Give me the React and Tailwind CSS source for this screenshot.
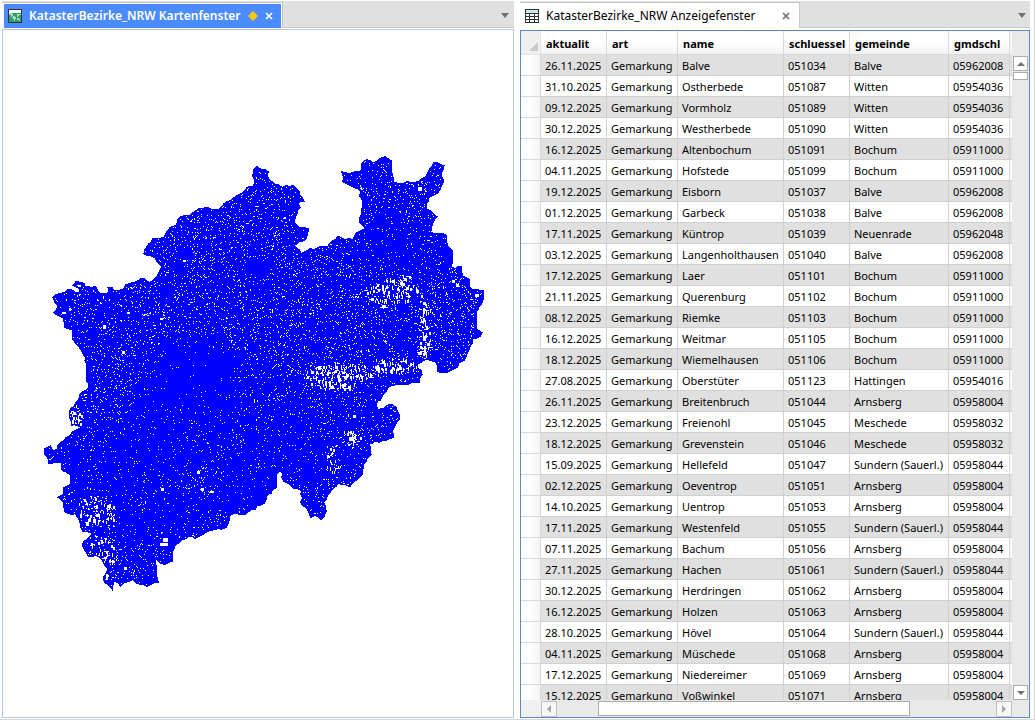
import React from "react";

const rows = [
  ["26.11.2025", "Gemarkung", "Balve", "051034", "Balve", "05962008"],
  ["31.10.2025", "Gemarkung", "Ostherbede", "051087", "Witten", "05954036"],
  ["09.12.2025", "Gemarkung", "Vormholz", "051089", "Witten", "05954036"],
  ["30.12.2025", "Gemarkung", "Westherbede", "051090", "Witten", "05954036"],
  ["16.12.2025", "Gemarkung", "Altenbochum", "051091", "Bochum", "05911000"],
  ["04.11.2025", "Gemarkung", "Hofstede", "051099", "Bochum", "05911000"],
  ["19.12.2025", "Gemarkung", "Eisborn", "051037", "Balve", "05962008"],
  ["01.12.2025", "Gemarkung", "Garbeck", "051038", "Balve", "05962008"],
  ["17.11.2025", "Gemarkung", "Küntrop", "051039", "Neuenrade", "05962048"],
  ["03.12.2025", "Gemarkung", "Langenholthausen", "051040", "Balve", "05962008"],
  ["17.12.2025", "Gemarkung", "Laer", "051101", "Bochum", "05911000"],
  ["21.11.2025", "Gemarkung", "Querenburg", "051102", "Bochum", "05911000"],
  ["08.12.2025", "Gemarkung", "Riemke", "051103", "Bochum", "05911000"],
  ["16.12.2025", "Gemarkung", "Weitmar", "051105", "Bochum", "05911000"],
  ["18.12.2025", "Gemarkung", "Wiemelhausen", "051106", "Bochum", "05911000"],
  ["27.08.2025", "Gemarkung", "Oberstüter", "051123", "Hattingen", "05954016"],
  ["26.11.2025", "Gemarkung", "Breitenbruch", "051044", "Arnsberg", "05958004"],
  ["23.12.2025", "Gemarkung", "Freienohl", "051045", "Meschede", "05958032"],
  ["18.12.2025", "Gemarkung", "Grevenstein", "051046", "Meschede", "05958032"],
  ["15.09.2025", "Gemarkung", "Hellefeld", "051047", "Sundern (Sauerl.)", "05958044"],
  ["02.12.2025", "Gemarkung", "Oeventrop", "051051", "Arnsberg", "05958004"],
  ["14.10.2025", "Gemarkung", "Uentrop", "051053", "Arnsberg", "05958004"],
  ["17.11.2025", "Gemarkung", "Westenfeld", "051055", "Sundern (Sauerl.)", "05958044"],
  ["07.11.2025", "Gemarkung", "Bachum", "051056", "Arnsberg", "05958004"],
  ["27.11.2025", "Gemarkung", "Hachen", "051061", "Sundern (Sauerl.)", "05958044"],
  ["30.12.2025", "Gemarkung", "Herdringen", "051062", "Arnsberg", "05958004"],
  ["16.12.2025", "Gemarkung", "Holzen", "051063", "Arnsberg", "05958004"],
  ["28.10.2025", "Gemarkung", "Hövel", "051064", "Sundern (Sauerl.)", "05958044"],
  ["04.11.2025", "Gemarkung", "Müschede", "051068", "Arnsberg", "05958004"],
  ["17.12.2025", "Gemarkung", "Niedereimer", "051069", "Arnsberg", "05958004"],
  ["15.12.2025", "Gemarkung", "Voßwinkel", "051071", "Arnsberg", "05958004"],
];

const columns = [
  { name: "aktualit", width: "w-[66px]" },
  { name: "art", width: "w-[71px]" },
  { name: "name", width: "w-[106px]" },
  { name: "schluessel", width: "w-[66px]" },
  { name: "gemeinde", width: "w-[99px]" },
  { name: "gmdschl", width: "w-[61px]" },
];

// Outer border of the districts, clockwise from the north-west
const border = [
  [144, 254], [147, 247], [153, 239], [164, 238], [170, 228], [176, 226], [181, 217], [190, 216],
  [199, 209], [218, 210], [227, 202], [237, 196], [247, 188], [253, 187], [255, 181], [253, 176],
  [257, 167], [268, 172], [269, 180], [282, 188], [293, 186], [299, 192], [304, 202], [298, 203],
  [300, 208], [297, 210], [294, 223], [300, 228], [308, 229], [306, 239], [294, 246], [301, 254],
  [310, 249], [328, 247], [338, 237], [353, 240], [357, 233], [366, 228], [360, 222], [362, 210],
  [361, 192], [355, 188], [343, 182], [342, 172], [352, 173], [361, 172], [362, 164], [367, 160],
  [373, 163], [385, 157], [391, 161], [393, 182], [398, 184], [419, 182], [428, 173], [434, 163],
  [444, 166], [441, 174], [444, 182], [438, 193], [428, 198], [426, 209], [437, 217], [433, 223],
  [430, 233], [446, 235], [447, 243], [452, 250], [452, 268], [462, 267], [463, 277], [470, 280],
  [472, 290], [484, 291], [482, 304], [476, 312], [477, 330], [482, 333], [480, 337], [472, 338],
  [473, 343], [466, 358], [455, 369], [447, 373], [438, 372], [437, 363], [428, 360], [417, 364],
  [422, 375], [419, 383], [400, 385], [388, 388], [382, 397], [376, 405], [379, 411], [392, 405],
  [396, 408], [399, 420], [392, 432], [393, 438], [386, 441], [368, 443], [371, 455], [363, 465],
  [362, 475], [350, 487], [338, 483], [327, 497], [323, 503], [326, 512], [321, 520], [315, 516],
  [311, 518], [309, 512], [301, 503], [302, 492], [292, 487], [284, 482], [283, 473], [277, 473],
  [276, 488], [267, 495], [264, 504], [257, 506], [255, 510], [240, 515], [229, 516], [226, 528],
  [207, 532], [195, 539], [188, 537], [175, 546], [172, 553], [172, 562], [165, 565], [155, 560],
  [156, 572], [158, 583], [147, 587], [137, 584], [133, 580], [120, 587], [114, 582], [112, 590],
  [103, 579], [108, 570], [103, 563], [98, 557], [88, 557], [82, 545], [92, 534], [83, 532],
  [75, 514], [65, 513], [63, 503], [58, 498], [63, 495], [63, 489], [70, 485], [70, 475],
  [62, 471], [62, 463], [48, 464], [44, 450], [50, 447], [53, 452], [72, 433], [83, 428],
  [71, 426], [69, 413], [80, 395], [88, 389], [86, 358], [73, 340], [73, 330], [64, 327],
  [63, 318], [54, 313], [57, 305], [53, 298], [68, 290], [79, 293], [80, 289], [73, 286],
  [76, 282], [84, 284], [85, 288], [95, 287], [98, 293], [107, 294], [108, 288], [118, 291],
  [130, 284], [144, 279], [150, 283], [157, 277], [162, 267], [155, 258],
];

// Areas with small or large districts: x, y, rx, ry, share of open pixels
const areas = [
  [424, 332, 5, 34, 0.17],
  [404, 284, 12, 8, 0.16],
  [392, 292, 26, 14, 0.13],
  [340, 372, 38, 9, 0.17],
  [396, 365, 24, 8, 0.15],
  [336, 384, 22, 6, 0.17],
  [449, 318, 28, 42, 0.09],
  [350, 438, 10, 8, 0.17],
  [333, 462, 6, 16, 0.14],
  [98, 512, 18, 14, 0.14],
  [100, 555, 14, 20, 0.14],
  [75, 415, 6, 12, 0.2],
  [205, 480, 16, 16, 0.07],
  [194, 372, 46, 36, 0.01],
  [180, 415, 60, 34, 0.025],
  [258, 268, 14, 10, 0.01],
  [385, 245, 34, 32, 0.025],
  [150, 480, 90, 60, 0.03],
  [290, 450, 60, 40, 0.035],
  [245, 490, 40, 25, 0.02],
  [160, 310, 90, 44, 0.075],
  [110, 360, 38, 50, 0.07],
  [230, 235, 60, 50, 0.08],
  [320, 320, 80, 60, 0.075],
];

const holes = [
  [103, 325, 3, 4], [122, 351, 3, 3], [127, 312, 3, 2], [160, 318, 3, 2], [183, 260, 3, 2],
  [418, 187, 4, 4], [401, 283, 4, 3], [406, 287, 3, 3], [452, 280, 3, 3], [456, 284, 3, 3],
  [423, 308, 2, 6], [423, 318, 2, 4], [423, 336, 3, 5], [424, 346, 2, 7], [418, 352, 3, 3],
  [311, 371, 3, 3], [318, 366, 3, 4], [327, 372, 2, 5], [338, 379, 3, 4], [330, 387, 4, 3],
  [376, 368, 4, 3], [384, 363, 2, 4], [399, 365, 2, 5], [349, 438, 5, 4], [353, 416, 3, 3],
  [163, 539, 5, 4], [160, 544, 8, 3], [96, 515, 4, 3], [107, 506, 3, 3], [93, 520, 3, 4],
  [124, 568, 3, 3], [210, 492, 4, 2], [201, 489, 3, 3], [197, 472, 3, 3], [161, 489, 3, 3],
  [69, 308, 2, 3], [62, 312, 4, 2], [77, 285, 4, 2], [475, 294, 4, 3], [106, 575, 2, 6],
];

const random = (seed) => () => {
  seed = (seed * 16807) % 2147483647;
  return seed / 2147483647;
};

const buildBorder = () => {
  const rnd = random(77);
  const points = [];
  border.forEach(([x, y], i) => {
    const [nx, ny] = border[(i + 1) % border.length];
    const steps = Math.max(1, Math.round(Math.hypot(nx - x, ny - y) / 4));
    for (let s = 0; s < steps; s++) {
      const jitter = s === 0 ? 0 : 2.4;
      const px = x + ((nx - x) * s) / steps + (rnd() - 0.5) * jitter;
      const py = y + ((ny - y) * s) / steps + (rnd() - 0.5) * jitter;
      points.push(`${Math.round(px)},${Math.round(py)}`);
    }
  });
  return points.join(" ");
};

const buildGaps = () => {
  const rnd = random(4211);
  let d = "";
  for (let y = 158; y < 590; y++) {
    for (let x = 46; x < 484; x++) {
      const area = areas.find(
        ([ax, ay, rx, ry]) => ((x - ax) / rx) ** 2 + ((y - ay) / ry) ** 2 < 0.5 + rnd()
      );
      const share = area ? area[4] : 0.055;
      if (rnd() < share) {
        const w = share > 0.12 && rnd() < 0.3 ? 2 : 1;
        const h = share > 0.12 && rnd() < 0.35 ? 3 : 1;
        d += `M${x} ${y}h${w}v${h}h-${w}z`;
      }
    }
  }
  holes.forEach(([x, y, w, h]) => {
    d += `M${x} ${y}h${w}v${h}h-${w}z`;
  });
  return d;
};

const borderPoints = buildBorder();
const gapPath = buildGaps();

const DistrictMap = () => (
  <svg
    viewBox="3 30 510 688"
    className="block w-full h-full"
    shapeRendering="crispEdges"
    role="img"
    aria-label="KatasterBezirke_NRW"
  >
    <polygon points={borderPoints} fill="#0000ff" />
    <path d={gapPath} fill="#ffffff" />
    <polygon points={borderPoints} fill="none" stroke="#0000ff" strokeWidth="1.5" />
  </svg>
);

const MapIcon = () => (
  <svg width="14" height="14" viewBox="0 0 14 14" shapeRendering="crispEdges" aria-hidden="true">
    <rect width="14" height="14" fill="#333333" />
    <rect x="1" y="1" width="12" height="3" fill="#ffffff" />
    <rect x="1" y="4" width="12" height="9" fill="#2f9e6b" />
    <path d="M1 4h3v1h1v2h-1v1h-1v-2h-2zM5 7h2v1h1v2h-1v2h-1v-2h-1v-1h-1v-1h1zM9 5h4v1h-2v1h-1v1h-1zM9 9h2v1h1v2h-1v-1h-2z" fill="#a5dcc3" />
  </svg>
);

const TableIcon = () => (
  <svg width="14" height="14" viewBox="0 0 14 14" shapeRendering="crispEdges" aria-hidden="true">
    <rect width="14" height="14" fill="#333333" />
    <rect x="1" y="1" width="12" height="3" fill="#c5eef2" />
    <path
      d="M1 5h3v2h-3zM5 5h4v2h-4zM10 5h3v2h-3zM1 8h3v2h-3zM5 8h4v2h-4zM10 8h3v2h-3zM1 11h3v2h-3zM5 11h4v2h-4zM10 11h3v2h-3z"
      fill="#ffffff"
    />
  </svg>
);

const CloseIcon = () => (
  <svg width="8" height="8" viewBox="0 0 8 8" aria-hidden="true">
    <path d="M1 1l6 6M7 1l-6 6" stroke="currentColor" strokeWidth="1.7" />
  </svg>
);

const Arrow = ({ points, fill = "#707070" }) => (
  <svg width="8" height="8" viewBox="0 0 8 8" aria-hidden="true">
    <polygon points={points} fill={fill} />
  </svg>
);

const WindowMenu = () => (
  <button aria-label="Fensterliste" className="ml-auto w-4 flex items-center justify-center pt-0.5">
    <Arrow points="0,2 8,2 4,7" />
  </button>
);

const MapWindow = () => (
  <section className="grow-[512] basis-0 min-w-0 flex flex-col">
    <div className="h-[27px] shrink-0 flex bg-[#e0e0e0]">
      <div className="mt-px flex items-center border-t border-r border-[#c8c8c8] bg-white pt-px pl-0.5 pr-px">
        <div className="h-full flex items-center bg-[#4a8cff] text-white pl-1 pr-2">
          <MapIcon />
          <span className="ml-[7px] text-xs font-semibold whitespace-nowrap">
            KatasterBezirke_NRW Kartenfenster
          </span>
          <svg width="12" height="12" viewBox="0 0 12 12" className="ml-1.5" aria-hidden="true">
            <polygon points="6,1 11,6 6,11 1,6" fill="#ffc800" />
          </svg>
          <button aria-label="Schließen" className="ml-1.5">
            <CloseIcon />
          </button>
        </div>
      </div>
      <div className="flex-1 flex border-b border-[#c8c8c8] pr-px">
        <WindowMenu />
      </div>
    </div>
    <div className="mt-px flex-1 min-h-0 border border-[#b7c9e3] bg-white">
      <DistrictMap />
    </div>
  </section>
);

const DataTable = () => (
  <table className="w-full table-fixed border-separate border-spacing-0 text-[11px] leading-4 text-black">
    <colgroup>
      <col className="w-5" />
      {columns.map((c) => (
        <col key={c.name} className={c.width} />
      ))}
      <col />
    </colgroup>
    <thead>
      <tr className="h-6">
        <th className="p-0 bg-[#efefef] border-r border-b border-[#e4e4e4]" aria-label="Alle auswählen">
          <svg width="9" height="9" viewBox="0 0 9 9" className="ml-2 mt-2" aria-hidden="true">
            <polygon points="9,0 9,9 0,9" fill="#cacaca" />
          </svg>
        </th>
        {columns.map((c) => (
          <th
            key={c.name}
            className="pt-0.5 pb-0 pl-[5px] pr-0 text-left font-bold whitespace-nowrap bg-linear-to-b from-white from-50% to-[#f1f2f4] border-r border-b border-[#d9d9d9]"
          >
            {c.name}
          </th>
        ))}
        <th className="p-0 bg-[#f6f6f7] border-b border-[#d9d9d9]" />
      </tr>
    </thead>
    <tbody>
      {rows.map((row) => (
        <tr key={row[3]} className="h-[21px] bg-white odd:bg-[#e0e0e0]">
          <td className="p-0 bg-linear-to-r from-white from-45% to-[#f3f4f6] border-r border-b border-[#d9d9d9]" />
          {row.map((value, i) => (
            <td
              key={i}
              className="pt-0.5 pb-0 pl-1 pr-0 whitespace-nowrap overflow-hidden border-r border-b border-[#d0d0d0]"
            >
              {value}
            </td>
          ))}
          <td className="p-0 border-b border-[#d0d0d0]" />
        </tr>
      ))}
    </tbody>
  </table>
);

const TableWindow = () => (
  <section className="grow-[510] basis-0 min-w-0 flex flex-col">
    <div className="h-[27px] shrink-0 flex bg-[#e0e0e0]">
      <div className="mt-px flex items-center border-t border-r border-[#c8c8c8] bg-white pl-[5px] pr-[9px]">
        <TableIcon />
        <span className="ml-[7px] text-xs text-black whitespace-nowrap">
          KatasterBezirke_NRW Anzeigefenster
        </span>
        <button aria-label="Schließen" className="ml-[27px] text-[#707070]">
          <CloseIcon />
        </button>
      </div>
      <div className="flex-1 flex border-b border-[#c8c8c8]">
        <WindowMenu />
      </div>
    </div>
    <div className="mt-0.5 flex-1 min-h-0 flex flex-col border border-[#5b8cc0] bg-[#e9e9e9]">
      <div className="flex-1 min-h-0 flex">
        <div className="flex-1 min-w-0 overflow-hidden">
          <DataTable />
        </div>
        <div className="w-[17px] shrink-0 flex flex-col items-center pt-[25px]">
          <button
            aria-label="Nach oben"
            className="w-[15px] h-[15px] flex items-center justify-center bg-white border border-[#ababab]"
          >
            <Arrow points="0,6 8,6 4,2" />
          </button>
          <div className="mt-px w-[15px] h-2 bg-white border border-[#ababab]" />
          <button
            aria-label="Nach unten"
            className="mt-auto w-[15px] h-[15px] flex items-center justify-center bg-white border border-[#ababab]"
          >
            <Arrow points="0,2 8,2 4,6" />
          </button>
        </div>
      </div>
      <div className="h-[17px] shrink-0 flex items-center pr-[17px]">
        <div className="w-5 h-full bg-[#f0f0f0]" />
        <button
          aria-label="Nach links"
          className="w-4 h-4 flex items-center justify-center bg-[#f7f7f7] border border-[#c0c0c0]"
        >
          <Arrow points="6,0 6,8 2,4" fill="#a8a8a8" />
        </button>
        <div className="flex-1 flex pl-[41px] pr-[86px]">
          <div className="flex-1 h-[15px] bg-white border border-[#ababab]" />
        </div>
        <button
          aria-label="Nach rechts"
          className="w-4 h-4 flex items-center justify-center bg-[#f7f7f7] border border-[#c0c0c0]"
        >
          <Arrow points="2,0 2,8 6,4" fill="#a8a8a8" />
        </button>
      </div>
    </div>
  </section>
);

const App = () => {
  return (
    <div className="h-screen flex gap-1.5 pl-0.5 pr-1 pt-px pb-px bg-white border-r border-b border-[#d8d8d8] font-['Noto_Sans','Open_Sans',sans-serif]">
      <MapWindow />
      <TableWindow />
    </div>
  );
};

export default App;
